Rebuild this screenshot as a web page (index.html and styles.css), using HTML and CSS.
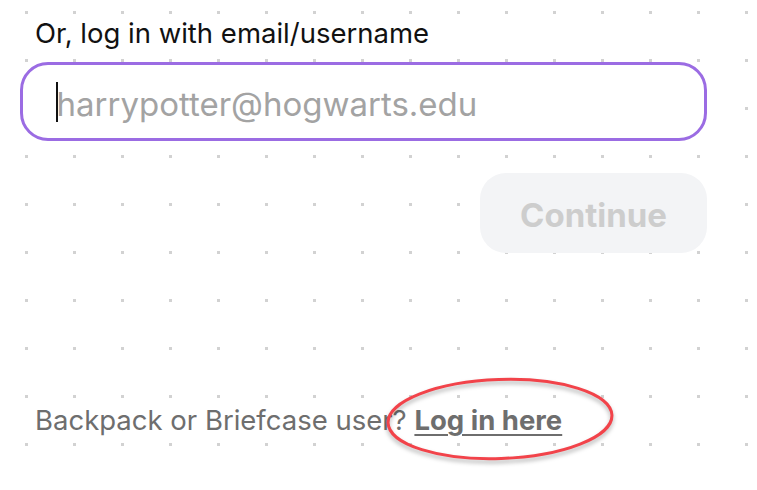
FILE: index.html
```html
<!DOCTYPE html>
<html lang="en">
<head>
<meta charset="utf-8">
<title>Log in</title>
<link rel="stylesheet" href="styles.css">
</head>
<body>
<main class="page">
  <p class="label">Or, log in with email/username</p>
  <div class="field">
    <span class="caret"></span>
    <span class="placeholder">harrypotter@hogwarts.edu</span>
  </div>
  <div class="actions">
    <button class="continue" type="button">Continue</button>
  </div>
  <p class="footer">Backpack or Briefcase user? <a class="link" href="#">Log in here</a></p>
</main>
<svg class="annotation" width="240" height="96" viewBox="0 0 240 96" aria-hidden="true">
  <ellipse cx="119" cy="45" rx="112" ry="39.5" transform="rotate(-2 119 45)" fill="none" stroke="#f2434a" stroke-width="3"/>
</svg>
</body>
</html>
```
FILE: styles.css
```css
html, body {
  margin: 0;
  padding: 0;
}

body {
  width: 757px;
  height: 490px;
  overflow: hidden;
  position: relative;
  font-family: Inter, "Noto Sans", sans-serif;
  background-color: #ffffff;
  background-image: conic-gradient(at 3px 3px, transparent 270deg, #d2d2d2 0);
  background-size: 48px 48px;
  background-position: 25px 11px;
}

.page {
  width: 687px;
  padding: 16px 0 0 20px;
  display: flex;
  flex-direction: column;
}

.label {
  margin: 0 0 0 15px;
  font-size: 27.5px;
  line-height: 34px;
  color: #111111;
}

.field {
  margin-top: 12px;
  box-sizing: border-box;
  height: 79px;
  border: 3.5px solid #9b6ce3;
  border-radius: 28px;
  background: #ffffff;
  display: flex;
  align-items: center;
  padding-left: 32.5px;
}

.caret {
  display: inline-block;
  width: 2px;
  height: 40px;
  background: #111111;
  margin-right: -1px;
}

.placeholder {
  font-size: 33px;
  line-height: 40px;
  color: #a3a3a3;
  margin-top: 5px;
}

.actions {
  margin-top: 32px;
  display: flex;
  justify-content: flex-end;
}

.continue {
  width: 227px;
  height: 80px;
  border: none;
  border-radius: 26px;
  background: #f3f4f6;
  color: #cdcdcd;
  font-family: Inter, "Noto Sans", sans-serif;
  font-weight: 700;
  font-size: 33px;
  line-height: 40px;
  padding: 3px 0 0;
}

.footer {
  margin: 150px 0 0 15px;
  font-size: 27.5px;
  line-height: 34px;
  color: #6e6e6e;
}

.link {
  color: #6e6e6e;
  font-weight: 700;
  text-decoration: underline;
  text-decoration-thickness: 2px;
  text-underline-offset: 4px;
}

.annotation {
  position: absolute;
  left: 381px;
  top: 374px;
  overflow: visible;
  filter: drop-shadow(0 3px 2px rgba(0, 0, 0, 0.3));
}
```
